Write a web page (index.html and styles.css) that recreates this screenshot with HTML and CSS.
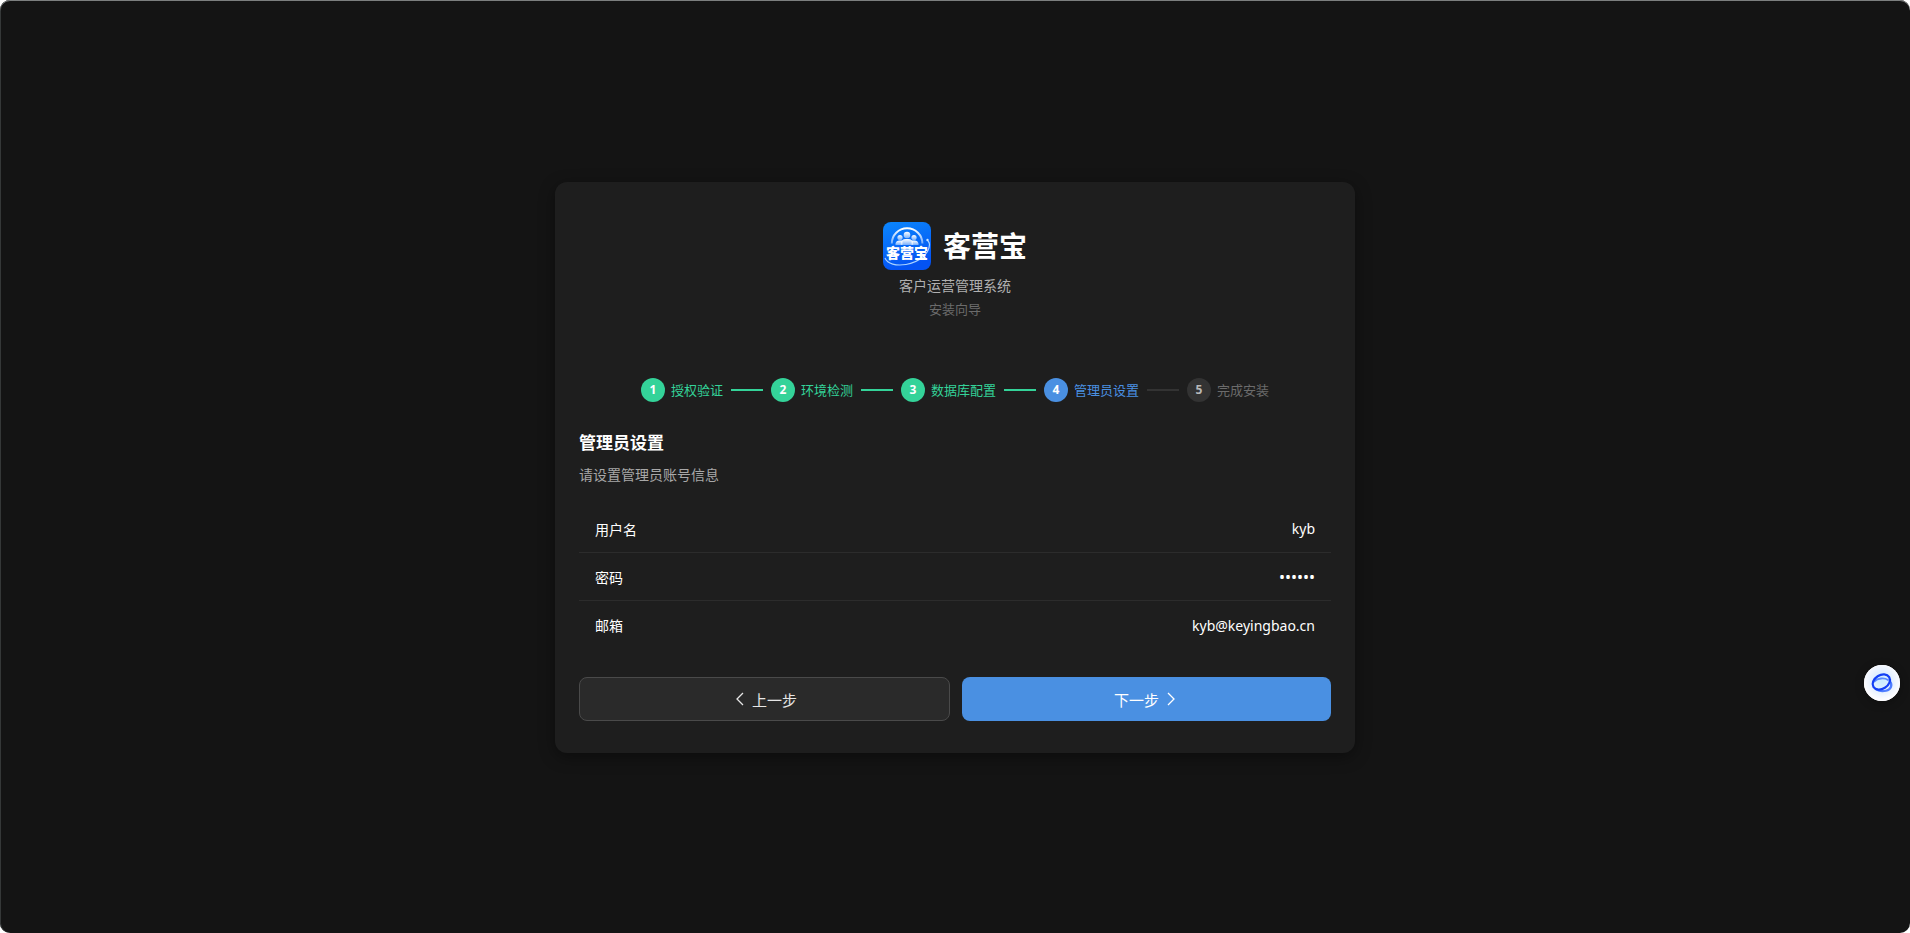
FILE: index.html
```html
<!DOCTYPE html>
<html lang="zh-CN">
<head>
<meta charset="utf-8">
<meta name="viewport" content="width=device-width, initial-scale=1">
<title>客营宝 安装向导</title>
<link rel="stylesheet" href="styles.css">
</head>
<body>
<div class="page">
  <main class="card">
    <header class="brand">
      <div class="brand-row">
        <svg class="logo" viewBox="0 0 48 48" role="img" aria-label="客营宝">
          <defs>
            <linearGradient id="logo-bg" x1="0" y1="0" x2="0.3" y2="1">
              <stop offset="0" stop-color="#0b87fd"/>
              <stop offset="1" stop-color="#0453f3"/>
            </linearGradient>
            <linearGradient id="fade" x1="0" y1="0" x2="0" y2="1">
              <stop offset="0" stop-color="#fff"/>
              <stop offset="1" stop-color="#fff" stop-opacity="0.45"/>
            </linearGradient>
          </defs>
          <rect width="48" height="48" rx="8" fill="url(#logo-bg)"/>
          <path d="M8.800 21.500a15.300 15.300 0 0 1 30.600 0" fill="none" stroke="url(#fade)" stroke-width="2"/>
          <g fill="url(#fade)">
            <circle cx="17" cy="15.500" r="2.600"/>
            <circle cx="31" cy="15.500" r="2.600"/>
            <path d="M12.500 23v-1.500a4 4 0 0 1 4-3h3V23zM35.500 23v-1.500a4 4 0 0 0-4-3h-3V23z"/>
            <circle cx="24" cy="13" r="3.300"/>
            <path d="M17.800 23v-1.500a5 5 0 0 1 5-4.500h2.400a5 5 0 0 1 5 4.500V23z"/>
          </g>
          <path d="M2 36c2.500 6 11 8 21 6.500C36 40.500 46 32 46.500 22.500c0-1.500-.5-2.500-1.500-3.500" fill="none" stroke="#a9d2ff" stroke-width="1.200"/>
          <circle cx="44.500" cy="18" r="1.200" fill="#cfe6ff"/>
          <text class="logo-text" x="24" y="36" text-anchor="middle">客营宝</text>
        </svg>
        <h1 class="brand-name">客营宝</h1>
      </div>
      <p class="brand-sub">客户运营管理系统</p>
      <p class="brand-guide">安装向导</p>
    </header>

    <ol class="steps">
      <li class="step done"><span class="num">1</span><span>授权验证</span></li>
      <li class="step done"><span class="num">2</span><span>环境检测</span></li>
      <li class="step done"><span class="num">3</span><span>数据库配置</span></li>
      <li class="step active"><span class="num">4</span><span>管理员设置</span></li>
      <li class="step"><span class="num">5</span><span>完成安装</span></li>
    </ol>

    <form class="form">
      <h2 class="form-title">管理员设置</h2>
      <p class="form-desc">请设置管理员账号信息</p>
      <div class="fields">
        <div class="field">
          <label for="username">用户名</label>
          <input id="username" type="text" value="kyb" autocomplete="off">
        </div>
        <div class="field">
          <label for="password">密码</label>
          <input id="password" type="password" value="123456" autocomplete="off">
        </div>
        <div class="field">
          <label for="email">邮箱</label>
          <input id="email" type="text" value="kyb@keyingbao.cn" autocomplete="off">
        </div>
      </div>
      <div class="actions">
        <button class="btn btn-prev" type="button">
          <svg class="chevron" viewBox="0 0 16 16" aria-hidden="true"><path d="M11 2L5 8l6 6"/></svg>
          <span>上一步</span>
        </button>
        <button class="btn btn-next" type="button">
          <span>下一步</span>
          <svg class="chevron" viewBox="0 0 16 16" aria-hidden="true"><path d="M5 2l6 6-6 6"/></svg>
        </button>
      </div>
    </form>
  </main>
  <button class="assistant" type="button" aria-label="助手">
    <svg viewBox="0 0 36 36" aria-hidden="true">
      <defs>
        <radialGradient id="glow" cx="0.5" cy="0.45" r="0.5">
          <stop offset="0" stop-color="#c9ecff"/>
          <stop offset="0.6" stop-color="#e6f1ff"/>
          <stop offset="1" stop-color="#fcfcff"/>
        </radialGradient>
      </defs>
      <circle cx="18" cy="18" r="18" fill="url(#glow)"/>
      <g fill="none" stroke-linecap="round">
        <path d="M10.500 16.500c3-3.500 10-4 13.500-1.500" stroke="#5a8bff" stroke-width="1.800"/>
        <path d="M26 16.500c2.800 3.500 1 8-4 9.200-3.500.8-7 .3-9.500-1.200" stroke="#4f7dff" stroke-width="2.200"/>
        <ellipse cx="17.300" cy="17" rx="9.300" ry="6.800" transform="rotate(-32 17.300 17)" stroke="#1440f5" stroke-width="2.200"/>
      </g>
    </svg>
  </button>
</div>
</body>
</html>
```
FILE: styles.css
```css
* {
  box-sizing: border-box;
}

body {
  margin: 0;
  background: #fff;
  font-family: "Noto Sans", "Noto Sans CJK SC", sans-serif;
  color: #fff;
}

h1, h2, p, ol {
  margin: 0;
  padding: 0;
}

.page {
  min-height: 100vh;
  display: flex;
  align-items: center;
  justify-content: center;
  padding: 26px 24px 24px;
  background: #141414;
  border-radius: 10px;
  box-shadow: inset 0 1px 0 #7c7f7f, inset 1px 0 0 #353838;
}

.card {
  width: 100%;
  max-width: 800px;
  padding: 24px 24px 32px;
  background: #1e1e1e;
  border-radius: 12px;
  box-shadow: 0 4px 16px rgba(0, 0, 0, 0.4);
}

.brand {
  display: flex;
  flex-direction: column;
  align-items: center;
  padding-top: 16px;
}

.brand-row {
  display: flex;
  align-items: center;
  gap: 12px;
  margin-bottom: 6px;
}

.logo {
  width: 48px;
  height: 48px;
}

.logo-text {
  font: 900 14px "Noto Sans CJK SC", sans-serif;
  fill: #fff;
}

.brand-name {
  font-size: 28px;
  line-height: 40px;
  font-weight: 700;
}

.brand-sub {
  font-size: 14px;
  line-height: 20px;
  color: #b0b0b0;
}

.brand-guide {
  margin-top: 3px;
  font-size: 13px;
  line-height: 20px;
  color: #6b6b6b;
}

.steps {
  display: flex;
  align-items: center;
  justify-content: center;
  flex-wrap: wrap;
  margin-top: 59px;
  list-style: none;
  font-size: 13px;
  line-height: 24px;
}

.step {
  display: flex;
  align-items: center;
  gap: 6px;
  color: #6b6b6b;
}

.step:not(:last-child)::after {
  content: "";
  width: 32px;
  height: 2px;
  margin: 0 8px 0 2px;
  background: #333;
}

.num {
  width: 24px;
  height: 24px;
  border-radius: 50%;
  background: #333;
  color: #b8b8b8;
  font-size: 12px;
  font-weight: 700;
  text-align: center;
}

.step.done {
  color: #34d399;
}

.step.done .num,
.step.done::after {
  background: #34d399;
}

.step.active {
  color: #4a90e2;
}

.step.active .num {
  background: #4a90e2;
}

.step.done .num,
.step.active .num {
  color: #fff;
}

.form-title {
  margin-top: 28px;
  font-size: 17px;
  line-height: 26px;
  font-weight: 700;
}

.form-desc {
  margin-top: 9px;
  font-size: 14px;
  line-height: 20px;
  color: #a8a8a8;
}

.fields {
  margin-top: 20px;
}

.field {
  display: flex;
  align-items: center;
  height: 48px;
  padding: 0 16px;
  font-size: 14px;
}

.field:not(:last-child) {
  border-bottom: 1px solid #2c2c2c;
}

.field input {
  flex: 1;
  min-width: 0;
  padding: 0;
  border: 0;
  outline: 0;
  background: transparent;
  color: #fff;
  font: inherit;
  text-align: right;
}

.field input[type="password"] {
  font-size: 16px;
}

.actions {
  display: flex;
  gap: 12px;
  margin-top: 28px;
}

.btn {
  flex: 1;
  display: flex;
  align-items: center;
  justify-content: center;
  gap: 4px;
  height: 44px;
  padding: 0;
  border: 0;
  border-radius: 8px;
  font: inherit;
  font-size: 15px;
}

.btn-prev {
  border: 1px solid #4a4a4a;
  background: #2a2a2a;
  color: #e6e6e6;
}

.btn-next {
  background: #4a90e2;
  color: #fff;
}

.chevron {
  width: 16px;
  height: 16px;
  fill: none;
  stroke: currentColor;
  stroke-width: 1.3;
}

.assistant {
  position: fixed;
  right: 10px;
  bottom: 232px;
  width: 36px;
  height: 36px;
  padding: 0;
  border: 0;
  border-radius: 50%;
  background: #fff;
  box-shadow: 0 2px 10px rgba(0, 0, 0, 0.3);
}

.assistant svg {
  display: block;
}
```
